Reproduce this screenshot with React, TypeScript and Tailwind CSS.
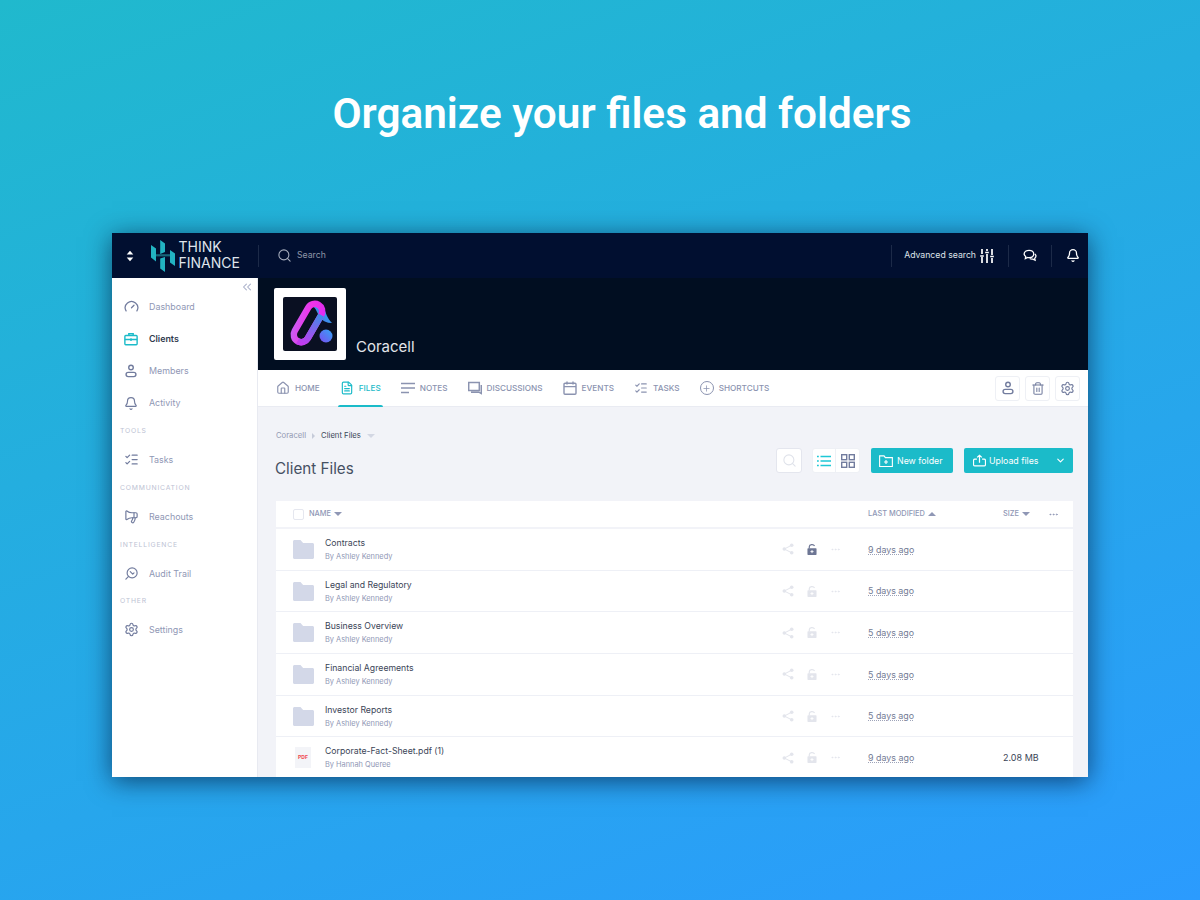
import React from 'react';
import {
  Bell, ChevronDown, ChevronsLeft, Ellipsis, FileText, Gauge, House,
  ListChecks, Megaphone, Plus, Search, SearchCheck, Settings, Trash2,
} from 'lucide-react';

const PersonIcon = ({ className }: { className?: string }) => (
  <svg viewBox="0 0 16 16" fill="none" stroke="currentColor" strokeWidth="1.6" className={className}>
    <circle cx="8" cy="4" r="2.6" />
    <rect x="2.4" y="9.6" width="11.2" height="4.8" rx="2.4" />
  </svg>
);

const CaseIcon = ({ className }: { className?: string }) => (
  <svg viewBox="0 0 16 16" fill="none" stroke="currentColor" strokeWidth="1.6" className={className}>
    <rect x="1" y="4" width="14" height="10.5" rx="1" />
    <path d="M5.5 4V2h5v2M1 8.6h14M8 7.2v3" />
  </svg>
);

const FolderIcon = () => (
  <svg viewBox="0 0 21 19" className="w-[21px] h-[19px] text-[#d3d8e8]" fill="currentColor">
    <path d="M0 1.500C0 .7.7 0 1.500 0h6l2.600 3h9.400c.8 0 1.500.7 1.500 1.500v13c0 .8-.7 1.500-1.500 1.500h-18C.7 19 0 18.300 0 17.500z" />
  </svg>
);

const ChatIcon = () => (
  <svg viewBox="0 0 16 16" fill="none" stroke="currentColor" strokeWidth="1.5" className="w-[14px] h-[14px] text-white">
    <path d="M7 1.500c3 0 5.300 1.800 5.300 4.200S10 9.900 7 9.900c-.6 0-1.200 0-1.700-.2L2.700 11l.4-2.500C2 7.700 1.300 6.800 1.300 5.700 1.300 3.300 4 1.500 7 1.500z" />
    <path d="M13.600 5.600c.8.700 1.200 1.500 1.200 2.500 0 1-.5 1.900-1.400 2.500l.4 2.200-2.500-1.200c-1.400.2-2.600 0-3.600-.7" />
  </svg>
);

const SlidersIcon = () => (
  <svg viewBox="0 0 14 16" className="w-[14px] h-[16px]" stroke="white" strokeWidth="1.700" fill="none">
    <path d="M2 1v5M2 9v6M7 1v2M7 6v9M12 1v6M12 10v5M.2 8h3.600M5.200 4.500h3.600M10.200 8.500h3.600" />
  </svg>
);

const SwitcherIcon = () => (
  <svg viewBox="0 0 8 12" className="w-[8px] h-[12px] mr-[17px] ml-[1px]" fill="white">
    <path d="M4 .8 7.300 4.600H.7zM4 11.200 .7 7.400h6.600z" />
  </svg>
);

const ShareIcon = () => (
  <svg viewBox="0 0 12 12" className="w-[12px] h-[12px]" fill="currentColor" stroke="currentColor">
    <circle cx="2.300" cy="6" r="1.800" stroke="none" />
    <circle cx="9.700" cy="2.200" r="1.800" stroke="none" />
    <circle cx="9.700" cy="9.800" r="1.800" stroke="none" />
    <path d="M9.700 2.200 2.300 6l7.400 3.800" fill="none" strokeWidth="1" />
  </svg>
);

const LockIcon = ({ className }: { className?: string }) => (
  <svg viewBox="0 0 11 12" className={`w-[10px] h-[11px] ${className ?? ''}`}>
    <path d="M2.500 5V3a3 2.400 0 0 1 5.800-.8" fill="none" stroke="currentColor" strokeWidth="1.300" />
    <rect x=".5" y="4.600" width="10" height="7.400" rx=".8" fill="currentColor" />
    <path d="M5.500 6.600v3.400M3.800 8.300h3.400" stroke="white" strokeWidth="1" />
  </svg>
);

const GridIcon = () => (
  <svg viewBox="0 0 14 14" className="w-[14px] h-[14px]" fill="none" stroke="#727c9e" strokeWidth="1.400">
    <rect x=".7" y=".7" width="5" height="5" />
    <rect x="8.300" y=".7" width="5" height="5" />
    <rect x=".7" y="8.300" width="5" height="5" />
    <rect x="8.300" y="8.300" width="5" height="5" />
  </svg>
);

const NewFolderIcon = () => (
  <svg viewBox="0 0 15 13" className="w-[14px] h-[12px]" fill="none" stroke="white" strokeWidth="1.200">
    <path d="M.6 1h4.800l1.400 1.800h7.600v9.600H.6zM7.500 5.500v4.200M5.400 7.600h4.200" />
  </svg>
);

const UploadIcon = () => (
  <svg viewBox="0 0 15 14" className="w-[13px] h-[13px]" fill="none" stroke="white" strokeWidth="1.400">
    <path d="M4.500 5.500H2.200c-.9 0-1.600.7-1.600 1.600v4.700c0 .8.700 1.500 1.600 1.500h10.600c.9 0 1.600-.7 1.600-1.500V7.100c0-.9-.7-1.600-1.600-1.600h-2.300M7.500 9.500V1M4.800 3.400 7.500.9l2.700 2.500" />
  </svg>
);

const CaretDown = ({ className }: { className?: string }) => (
  <span className={`inline-block w-0 h-0 border-x-[4px] border-x-transparent border-t-[4px] ${className ?? ''}`} />
);

const CoracellLogo = () => (
  <svg viewBox="0 0 54 54" className="w-[54px] h-[54px]">
    <defs>
      <linearGradient id="logo-a" x1="0" y1="1" x2="1" y2="0">
        <stop offset="0" stopColor="#c95cf2" />
        <stop offset="0.5" stopColor="#f033ea" />
        <stop offset="1" stopColor="#e02cf0" />
      </linearGradient>
      <linearGradient id="logo-b" x1="0" y1="1" x2="1" y2="0">
        <stop offset="0" stopColor="#5a60ea" />
        <stop offset="1" stopColor="#17c8ea" />
      </linearGradient>
      <linearGradient id="logo-c" x1="0" y1="1" x2="1" y2="0">
        <stop offset="0" stopColor="#7a4cf2" />
        <stop offset="1" stopColor="#32a5f5" />
      </linearGradient>
      <linearGradient id="logo-d" x1="0" y1="1" x2="0" y2="0">
        <stop offset="0" stopColor="#c23cf0" />
        <stop offset="1" stopColor="#3f8bea" />
      </linearGradient>
    </defs>
    <rect width="54" height="54" rx="2" fill="#0a1022" />
    <path d="M28 7C32 3.500 38 4.500 40.500 10c2 5 4 12 8.500 16-5.500 0-9.500-2-12.500-6l-4-8z" fill="url(#logo-b)" />
    <g transform="rotate(30 25 26)">
      <rect x="17.500" y="5" width="15" height="42" rx="7.500" fill="none" stroke="url(#logo-a)" strokeWidth="6.500" />
      <path d="M32.500 12.500V39.500A7.500 7.500 0 0 1 25 47" fill="none" stroke="url(#logo-d)" strokeWidth="6.500" />
    </g>
    <circle cx="43" cy="39" r="6.500" fill="url(#logo-c)" />
  </svg>
);

const ThinkLogo = () => (
  <svg viewBox="0 0 24 32" className="w-[24px] h-[32px]">
    <path d="M5 14.200h14v2.200H5z" fill="#17667a" />
    <g fill="#22b3c2">
      <path d="M0 5l5 3.500V21.500L0 17.500z" />
      <path d="M9.200 0l4.800 3.500V12L9.200 14z" />
      <path d="M9.200 18.500 14 17v15l-4.800-3.500z" />
      <path d="M19 10l5 3.500V26l-5-3.500z" />
    </g>
  </svg>
);

const iconClass = 'w-[15px] h-[15px]';

const navGroups = [
  { label: '', items: [
    { name: 'Dashboard', icon: <Gauge className={iconClass} strokeWidth={2} /> },
    { name: 'Clients', icon: <CaseIcon className="w-[14px] h-[14px] text-[#1bbbc9]" />, active: true },
    { name: 'Members', icon: <PersonIcon className="w-[14px] h-[14px]" /> },
    { name: 'Activity', icon: <Bell className="w-[14px] h-[15px]" strokeWidth={2} /> },
  ] },
  { label: 'TOOLS', items: [{ name: 'Tasks', icon: <ListChecks className={iconClass} strokeWidth={2} /> }] },
  { label: 'COMMUNICATION', items: [{ name: 'Reachouts', icon: <Megaphone className={`${iconClass} -scale-x-100`} strokeWidth={1.9} /> }] },
  { label: 'INTELLIGENCE', items: [{ name: 'Audit Trail', icon: <SearchCheck className={`${iconClass} -scale-x-100`} strokeWidth={1.9} /> }] },
  { label: 'OTHER', items: [{ name: 'Settings', icon: <Settings className={iconClass} strokeWidth={1.9} /> }] },
];

const tabs = [
  { name: 'HOME', icon: <House className="w-[14px] h-[14px]" strokeWidth={2} /> },
  { name: 'FILES', icon: <FileText className="w-[14px] h-[14px]" strokeWidth={2} />, active: true },
  { name: 'NOTES', icon: <svg viewBox="0 0 14 14" className="w-[14px] h-[14px]" stroke="currentColor" strokeWidth="1.6"><path d="M0 2.500h14M0 7h14M0 11.500h8" /></svg> },
  { name: 'DISCUSSIONS', icon: <svg viewBox="0 0 14 14" fill="none" className="w-[14px] h-[14px]" stroke="currentColor" strokeWidth="1.500"><path d="M.7 1.500h10.600v8H.7zM13.300 4v8.500l-2.500-1.300H3" /></svg> },
  { name: 'EVENTS', icon: <svg viewBox="0 0 14 14" fill="none" className="w-[14px] h-[14px]" stroke="currentColor" strokeWidth="1.400"><rect x="1" y="2.200" width="12" height="11" rx="1" /><path d="M1 5.600h12M4 .5v3M10 .5v3" /></svg> },
  { name: 'TASKS', icon: <ListChecks className="w-[14px] h-[14px]" strokeWidth={2} /> },
  { name: 'SHORTCUTS', icon: <span className="flex items-center justify-center w-[14px] h-[14px] rounded-full border border-current"><Plus className="w-[9px] h-[9px]" strokeWidth={2} /></span> },
];

const rows = [
  { name: 'Contracts', by: 'Ashley Kennedy', date: '9 days ago', locked: true },
  { name: 'Legal and Regulatory', by: 'Ashley Kennedy', date: '5 days ago' },
  { name: 'Business Overview', by: 'Ashley Kennedy', date: '5 days ago' },
  { name: 'Financial Agreements', by: 'Ashley Kennedy', date: '5 days ago' },
  { name: 'Investor Reports', by: 'Ashley Kennedy', date: '5 days ago' },
  { name: 'Corporate-Fact-Sheet.pdf (1)', by: 'Hannah Queree', date: '9 days ago', size: '2.08 MB', pdf: true },
];

export default function App() {
  return (
    <div className="w-full h-[900px] overflow-hidden bg-[linear-gradient(160deg,#20b9cd_0%,#2b9bfe_100%)] flex flex-col items-center font-['Inter',sans-serif]">
      <h1 className="mt-[86px] mb-[92px] pl-[44px] h-[55px] leading-[55px] text-[42.300px] font-semibold text-white font-['Roboto',sans-serif] whitespace-nowrap">
        Organize your files and folders
      </h1>

      <div className="w-[976px] h-[544px] shrink-0 overflow-hidden flex flex-col bg-white shadow-[0_4px_24px_rgba(0,20,50,0.65)]">
        {/* top bar */}
        <div className="h-[45px] shrink-0 bg-[#010f30] flex items-center text-white">
          <div className="w-[146px] h-full shrink-0 flex items-center pl-[13px]">
            <SwitcherIcon />
            <ThinkLogo />
            <div className="ml-[3.500px] -mt-[2px] text-[14px] leading-[16px] text-[#dfe4ec] font-normal">
              <div>THINK</div>
              <div>FINANCE</div>
            </div>
          </div>
          <div className="w-px h-[22px] bg-[#1c2a48]" />
          <Search className="w-[15px] h-[15px] ml-[18px] text-[#a7aebd]" strokeWidth={1.7} />
          <span className="ml-[5px] text-[8.700px] text-[#8e96a8]">Search</span>
          <div className="flex-1" />
          <div className="w-px h-[22px] bg-[#1c2a48]" />
          <span className="ml-[12px] text-[8.700px] text-[#dfe3ea]">Advanced search</span>
          <div className="ml-[4px]"><SlidersIcon /></div>
          <div className="w-px h-[22px] bg-[#1c2a48] ml-[14px]" />
          <div className="w-[42px] flex justify-center"><ChatIcon /></div>
          <div className="w-px h-[22px] bg-[#1c2a48]" />
          <div className="w-[36px] pl-[14px] flex"><Bell className="w-[14px] h-[15px]" strokeWidth={2.2} /></div>
        </div>

        <div className="flex-1 min-h-0 flex">
          {/* sidebar */}
          <div className="w-[146px] shrink-0 bg-white border-r border-[#e8eaf1] relative pt-[12.500px]">
            <ChevronsLeft className="absolute top-[2px] right-[3px] w-[14px] h-[14px] text-[#a9afc9]" strokeWidth={1.8} />
            {navGroups.map((g) => (
              <div key={g.items[0].name}>
                {g.label && (
                  <div className="h-[24.500px] pl-[8px] flex items-center text-[6.800px] tracking-[0.8px] text-[#bcc2d3]">{g.label}</div>
                )}
                {g.items.map((it) => (
                  <div key={it.name} className={`h-[32.200px] flex items-center text-[8.900px] ${it.active ? 'text-[#2f3a4d] font-semibold' : 'text-[#8f97b5]'}`}>
                    <div className="w-[37px] pl-[12px] flex items-center text-[#727c9e]">{it.icon}</div>
                    {it.name}
                  </div>
                ))}
              </div>
            ))}
          </div>

          <div className="flex-1 min-w-0 flex flex-col bg-[#f2f3f8]">
            {/* cover */}
            <div className="h-[92px] shrink-0 bg-[#010e21] pl-[16px] pt-[10px] flex items-start">
              <div className="w-[72px] h-[72px] bg-white rounded-[2px] flex items-center justify-center">
                <CoracellLogo />
              </div>
              <span className="ml-[10px] mt-[48px] text-[15px] text-[#e3e5ea]">Coracell</span>
            </div>

            {/* tabs */}
            <div className="h-[37px] shrink-0 bg-white border-b border-[#e9ebf2] flex items-stretch pl-[18px] pr-[8px]">
              {tabs.map((t) => (
                <div key={t.name} className={`relative flex items-center gap-[5px] mr-[20px] text-[8.200px] font-medium ${t.active ? 'text-[#1bbbc9]' : 'text-[#8b93b0]'}`}>
                  {t.icon}
                  <span>{t.name}</span>
                  {t.active && <div className="absolute -bottom-px -left-[2px] -right-[2px] h-[2px] bg-[#1bbbc9] rounded-t" />}
                </div>
              ))}
              <div className="flex-1" />
              <div className="flex items-center gap-[5px] text-[#727c9e]">
                <div className="w-[25px] h-[25px] border border-[#eef0f5] rounded-[3px] flex items-center justify-center"><PersonIcon className="w-[14px] h-[14px]" /></div>
                <div className="w-[25px] h-[25px] border border-[#eef0f5] rounded-[3px] flex items-center justify-center"><Trash2 className="w-[14px] h-[15px]" strokeWidth={1.8} /></div>
                <div className="w-[25px] h-[25px] border border-[#eef0f5] rounded-[3px] flex items-center justify-center"><Settings className="w-[15px] h-[15px]" strokeWidth={1.8} /></div>
              </div>
            </div>

            {/* content */}
            <div className="flex-1 min-h-0 overflow-hidden pl-[18px] pr-[15px]">
              <div className="flex items-center h-[14px] mt-[22px] text-[7.700px]">
                <span className="text-[#939ab3]">Coracell</span>
                <span className="mx-[6px] w-0 h-0 border-y-[3px] border-y-transparent border-l-[3px] border-l-[#c6cbd9]" />
                <span className="text-[#3b4557]">Client Files</span>
                <CaretDown className="ml-[6px] border-t-[#d3d7e3]" />
              </div>

              <div className="flex items-start h-[53px] mt-[5px]">
                <h2 className="mt-[11px] -ml-[1px] text-[15.200px] leading-[20px] text-[#465063] font-normal">Client Files</h2>
                <div className="flex-1" />
                <div className="w-[26px] h-[25px] bg-white border border-[#e4e6ee] rounded-[3px] flex items-center justify-center">
                  <Search className="w-[15px] h-[15px] text-[#dfe2ea]" strokeWidth={1.7} />
                </div>
                <div className="ml-[10px] h-[25px] flex bg-white rounded-[3px] border border-[#eef0f5]">
                  <div className="w-[23px] flex items-center justify-center border-r border-[#eef0f5]">
                    <svg viewBox="0 0 14 12" className="w-[14px] h-[12px]" stroke="#1ec8d6" strokeWidth="1.400"><path d="M3.500 1.500H14M3.500 6H14M3.500 10.500H14M0 1.500h1.800M0 6h1.800M0 10.500h1.800" /></svg>
                  </div>
                  <div className="w-[23px] flex items-center justify-center">
                    <GridIcon />
                  </div>
                </div>
                <div className="ml-[11px] w-[82px] h-[25px] bg-[#1bbbc9] rounded-[2px] flex items-center pl-[8px] gap-[4px] text-[8.800px] text-white">
                  <NewFolderIcon />
                  New folder
                </div>
                <div className="ml-[11px] w-[109px] h-[25px] bg-[#1bbbc9] rounded-[2px] flex items-center pl-[9px] gap-[3px] text-[8.800px] text-white">
                  <UploadIcon />
                  <span>Upload files</span>
                  <ChevronDown className="ml-auto mr-[7px] w-[11px] h-[11px]" strokeWidth={2.500} />
                </div>
              </div>

              {/* table */}
              <div className="bg-white">
                <div className="h-[28px] flex items-center border-b-2 border-[#f2f3f8] text-[7.400px] font-medium text-[#8f97b5]">
                  <div className="w-[11px] h-[11px] ml-[17px] border border-[#e5e7ef] rounded-[2px]" />
                  <span className="ml-[5px]">NAME</span>
                  <CaretDown className="ml-[3px] border-t-[#8f97b5]" />
                  <div className="flex-1" />
                  <div className="w-[135px] flex items-center">
                    <span>LAST MODIFIED</span>
                    <CaretDown className="ml-[3px] rotate-180 border-t-[#8f97b5]" />
                  </div>
                  <div className="w-[45px] flex items-center">
                    <span>SIZE</span>
                    <CaretDown className="ml-[3px] border-t-[#8f97b5]" />
                  </div>
                  <Ellipsis className="w-[11px] h-[11px] mr-[14px]" strokeWidth={2} />
                </div>

                {rows.map((r) => (
                  <div key={r.name} className="h-[41.700px] flex items-center border-b border-[#eef0f6]">
                    <div className="w-[49px] pl-[17px] flex items-center">
                      {r.pdf ? (
                        <div className="ml-[2px] w-[16px] h-[21px] bg-[#f3f4f8] flex items-center justify-center text-[5px] font-bold text-[#f0444f]">PDF</div>
                      ) : (
                        <FolderIcon />
                      )}
                    </div>
                    <div>
                      <div className="text-[8.700px] leading-[14px] text-[#3b4557]">{r.name}</div>
                      <div className="text-[7.400px] leading-[13px] text-[#8f97b5]">By {r.by}</div>
                    </div>
                    <div className="flex-1" />
                    <div className="w-[86px] flex items-center gap-[13px] text-[#e3e5ec]">
                      <ShareIcon />
                      <LockIcon className={r.locked ? 'text-[#6d7694]' : ''} />
                      <Ellipsis className="w-[11px] h-[11px]" />
                    </div>
                    <div className="w-[135px] text-[8.900px] text-[#737b95] underline decoration-dotted decoration-[#9ea4b9]">{r.date}</div>
                    <div className="w-[70px] text-[9px] text-[#3b4557]">{r.size}</div>
                  </div>
                ))}
              </div>
            </div>
          </div>
        </div>
      </div>
    </div>
  );
}
